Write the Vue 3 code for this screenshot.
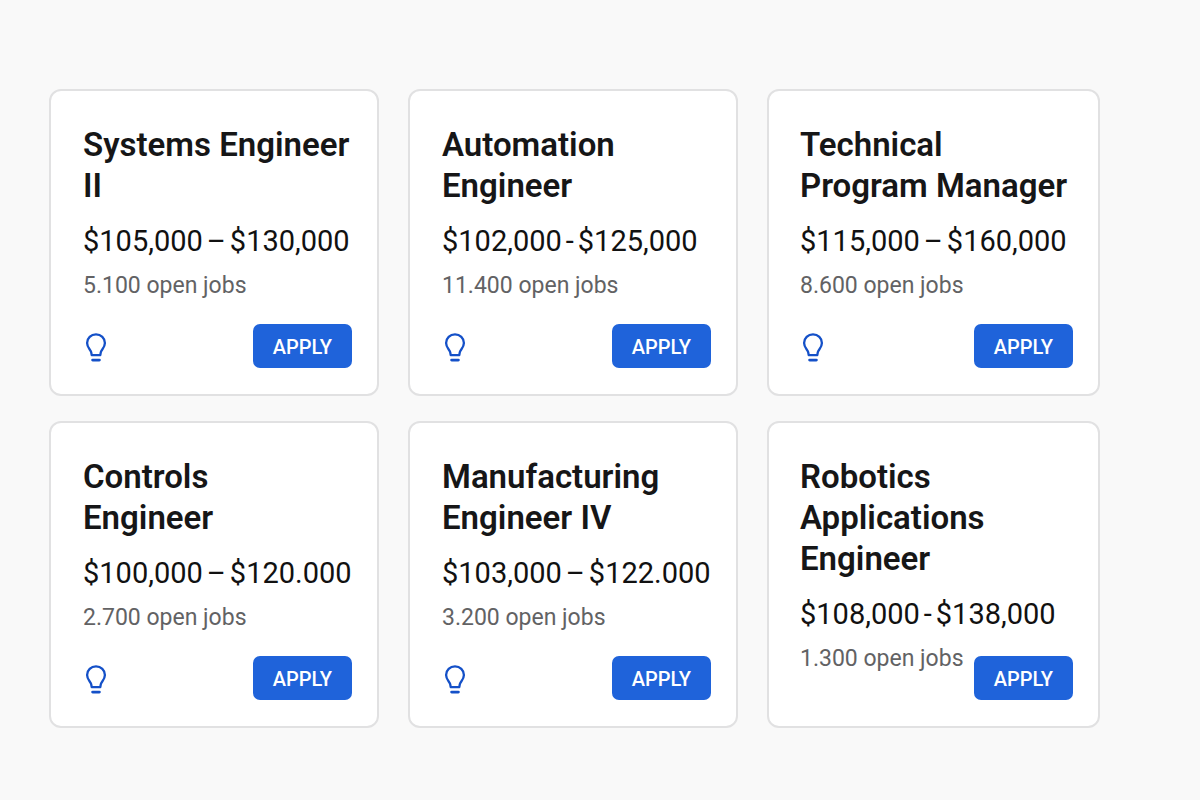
<script setup>
const jobs = [
  { id: 1, title: ['Systems Engineer', 'II'], from: '$105,000', dash: '–', to: '$130,000', open: '5.100', tip: true },
  { id: 2, title: ['Automation', 'Engineer'], from: '$102,000', dash: '-', to: '$125,000', open: '11.400', tip: true },
  { id: 3, title: ['Technical', 'Program Manager'], from: '$115,000', dash: '–', to: '$160,000', open: '8.600', tip: true },
  { id: 4, title: ['Controls', 'Engineer'], from: '$100,000', dash: '–', to: '$120.000', open: '2.700', tip: true },
  { id: 5, title: ['Manufacturing', 'Engineer IV'], from: '$103,000', dash: '–', to: '$122.000', open: '3.200', tip: true },
  { id: 6, title: ['Robotics', 'Applications', 'Engineer'], from: '$108,000', dash: '-', to: '$138,000', open: '1.300', tip: false },
]
</script>

<template>
  <main class="board">
    <article v-for="job in jobs" :key="job.id" class="card">
      <div class="details">
        <h2 class="title">{{ job.title.join('\n') }}</h2>
        <p class="salary"><span>{{ job.from }}</span> <span>{{ job.dash }}</span> <span>{{ job.to }}</span></p>
        <p class="open">{{ job.open }} open jobs</p>
      </div>
      <div class="actions">
        <button v-if="job.tip" class="tip" type="button" aria-label="Job insights">
          <svg viewBox="0 0 26 32" width="26" height="32" fill="none" stroke="#1450c8" stroke-width="2.3">
            <path d="M8.7 25.1 L8.2 22.2 C7.6 19.4 4.1 17.8 4.1 13 C4.1 8 8 4.4 13 4.4 C18 4.4 21.9 8 21.9 13 C21.9 17.8 18.4 19.4 17.8 22.2 L17.3 25.1 Z" stroke-linejoin="round" />
            <path d="M9.6 30.1 H16.4" stroke-width="2.8" stroke-linecap="round" />
          </svg>
        </button>
        <button class="apply" type="button">APPLY</button>
      </div>
    </article>
  </main>
</template>

<style>
body {
  margin: 0;
  background: #f9f9f9;
}
</style>

<style scoped>
.board {
  display: grid;
  grid-template-columns: 330fr 330fr 333fr;
  gap: 25px 29px;
  padding: 89px 100px 72px 49px;
  font-family: Roboto, "Liberation Sans", sans-serif;
}
.card {
  box-sizing: border-box;
  display: grid;
  min-width: 0;
  min-height: 307px;
  padding: 33px 25px 26px 32px;
  border: 2px solid #e1e1e2;
  border-radius: 12px;
  background: #fff;
}
.card:nth-child(3n) {
  padding-left: 31px;
}
/* Details and actions share one cell, so long titles run beside the button. */
.details,
.actions {
  grid-area: 1 / 1;
  min-width: 0;
}
.title {
  margin: 0;
  color: #161617;
  font-size: 33px;
  font-weight: 600;
  line-height: 41px;
  white-space: pre-line;
}
.salary {
  display: flex;
  gap: 4px;
  margin: 17px 0 0;
  color: #111;
  font-size: 29px;
  line-height: 36px;
  white-space: nowrap;
}
.open {
  margin: 12px 0 0;
  color: #626264;
  font-size: 23px;
  line-height: 30px;
}
.actions {
  display: flex;
  align-items: center;
  align-self: end;
  pointer-events: none;
}
.tip,
.apply {
  border: 0;
  cursor: pointer;
  font-family: inherit;
  pointer-events: auto;
}
.tip {
  display: flex;
  padding: 0;
  background: none;
}
.apply {
  height: 44px;
  min-width: 99px;
  margin-left: auto;
  padding: 2px 20px 0;
  border-radius: 7px;
  background: #1f63da;
  color: #fff;
  font-size: 20px;
  font-weight: 500;
}
</style>
